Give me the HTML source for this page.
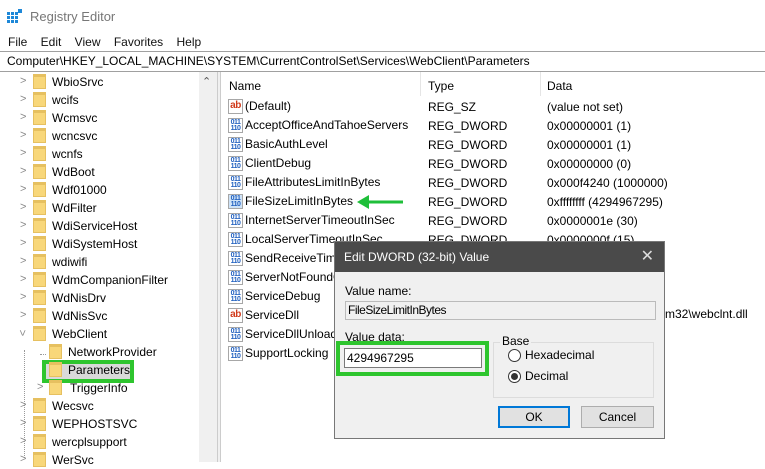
<!DOCTYPE html>
<html><head><meta charset="utf-8"><style>
*{margin:0;padding:0;box-sizing:border-box}
body{width:765px;height:462px;overflow:hidden;background:#fff;font-family:"Liberation Sans",sans-serif;font-size:12px;color:#000;position:relative}
.a{position:absolute;white-space:nowrap}
.tree div.r{position:absolute;height:18px;line-height:18px}
.fold{position:absolute;width:13px;height:15px;background:#f8d77a;border:1px solid #e6c060;border-top-width:3px}
.chev{position:absolute;color:#888;font-size:11px}
.row{position:absolute;left:228px;height:19px;line-height:19px}
.ic{position:absolute;width:15px;height:15px;top:2px;left:0;border:1px solid #a7a7a7;background:#fff;font-size:7px;line-height:6px;font-weight:bold;color:#1f5fbf;text-align:center;letter-spacing:-0.5px;padding-top:1px}
.ic.s{color:#d13b1c;font-size:10px;line-height:12px;padding-top:0}
.row .t{position:absolute;left:17px;font-size:12px}
</style></head><body>
<div class="a" style="left:7px;top:9px;width:15px;height:14px">
<svg width="15" height="14"><g fill="#1e88d8"><rect x="0" y="3" width="3" height="3"/><rect x="4" y="3" width="3" height="3"/><rect x="8" y="3" width="3" height="3"/><rect x="0" y="7" width="3" height="3"/><rect x="4" y="7" width="3" height="3"/><rect x="8" y="7" width="3" height="3"/><rect x="0" y="11" width="3" height="3"/><rect x="4" y="11" width="3" height="3"/><rect x="8" y="11" width="3" height="3"/><rect x="11" y="0" width="4" height="4"/></g></svg></div>
<div class="a" style="left:30px;top:9px;font-size:13px;color:#777">Registry Editor</div>
<div class="a" style="left:8px;top:35px;font-size:12px;color:#111">File&nbsp;&nbsp;&nbsp;&nbsp;Edit&nbsp;&nbsp;&nbsp;&nbsp;View&nbsp;&nbsp;&nbsp;&nbsp;Favorites&nbsp;&nbsp;&nbsp;&nbsp;Help</div>
<div class="a" style="left:0;top:51px;width:765px;height:21px;border-top:1px solid #a0a0a0;border-bottom:1px solid #a0a0a0;background:#fff"></div>
<div class="a" style="left:7px;top:54px;font-size:12px">Computer\HKEY_LOCAL_MACHINE\SYSTEM\CurrentControlSet\Services\WebClient\Parameters</div>
<div class="a" style="left:199px;top:72px;width:18px;height:390px;background:#f0f0f0"></div>
<div class="a" style="left:202px;top:75px;color:#555;font-size:11px">&#8963;</div>
<div class="a" style="left:217px;top:72px;width:4px;height:390px;background:#f0f0f0;border-left:1px solid #ccc;border-right:1px solid #ccc"></div>
<div class="a" style="left:24px;top:350px;height:108px;border-left:1px dotted #999"></div>
<div class="a" style="left:40px;top:354px;width:6px;border-top:1px dotted #999"></div>
<div class="tree">
<div class="chev" style="left:20px;top:75px">&gt;</div><div class="fold" style="left:33px;top:74px"></div><div class="r" style="left:52px;top:73px">WbioSrvc</div>
<div class="chev" style="left:20px;top:93px">&gt;</div><div class="fold" style="left:33px;top:92px"></div><div class="r" style="left:52px;top:91px">wcifs</div>
<div class="chev" style="left:20px;top:111px">&gt;</div><div class="fold" style="left:33px;top:110px"></div><div class="r" style="left:52px;top:109px">Wcmsvc</div>
<div class="chev" style="left:20px;top:129px">&gt;</div><div class="fold" style="left:33px;top:128px"></div><div class="r" style="left:52px;top:127px">wcncsvc</div>
<div class="chev" style="left:20px;top:147px">&gt;</div><div class="fold" style="left:33px;top:146px"></div><div class="r" style="left:52px;top:145px">wcnfs</div>
<div class="chev" style="left:20px;top:165px">&gt;</div><div class="fold" style="left:33px;top:164px"></div><div class="r" style="left:52px;top:163px">WdBoot</div>
<div class="chev" style="left:20px;top:183px">&gt;</div><div class="fold" style="left:33px;top:182px"></div><div class="r" style="left:52px;top:181px">Wdf01000</div>
<div class="chev" style="left:20px;top:201px">&gt;</div><div class="fold" style="left:33px;top:200px"></div><div class="r" style="left:52px;top:199px">WdFilter</div>
<div class="chev" style="left:20px;top:219px">&gt;</div><div class="fold" style="left:33px;top:218px"></div><div class="r" style="left:52px;top:217px">WdiServiceHost</div>
<div class="chev" style="left:20px;top:237px">&gt;</div><div class="fold" style="left:33px;top:236px"></div><div class="r" style="left:52px;top:235px">WdiSystemHost</div>
<div class="chev" style="left:20px;top:255px">&gt;</div><div class="fold" style="left:33px;top:254px"></div><div class="r" style="left:52px;top:253px">wdiwifi</div>
<div class="chev" style="left:20px;top:273px">&gt;</div><div class="fold" style="left:33px;top:272px"></div><div class="r" style="left:52px;top:271px">WdmCompanionFilter</div>
<div class="chev" style="left:20px;top:291px">&gt;</div><div class="fold" style="left:33px;top:290px"></div><div class="r" style="left:52px;top:289px">WdNisDrv</div>
<div class="chev" style="left:20px;top:309px">&gt;</div><div class="fold" style="left:33px;top:308px"></div><div class="r" style="left:52px;top:307px">WdNisSvc</div>
<div class="chev" style="left:19px;top:327px;transform:rotate(90deg)">&gt;</div><div class="fold" style="left:33px;top:326px"></div><div class="r" style="left:52px;top:325px">WebClient</div>
<div class="fold" style="left:49px;top:344px"></div><div class="r" style="left:68px;top:343px">NetworkProvider</div>
<div class="a" style="left:42px;top:360px;width:92px;height:23px;border:4px solid #2ec52e;background:#d9d9d9"></div>
<div class="fold" style="left:49px;top:362px"></div><div class="r" style="left:68px;top:361px">Parameters</div>
<div class="chev" style="left:37px;top:381px">&gt;</div><div class="fold" style="left:49px;top:380px"></div><div class="r" style="left:70px;top:379px">TriggerInfo</div>
<div class="chev" style="left:20px;top:399px">&gt;</div><div class="fold" style="left:33px;top:398px"></div><div class="r" style="left:52px;top:397px">Wecsvc</div>
<div class="chev" style="left:20px;top:417px">&gt;</div><div class="fold" style="left:33px;top:416px"></div><div class="r" style="left:52px;top:415px">WEPHOSTSVC</div>
<div class="chev" style="left:20px;top:435px">&gt;</div><div class="fold" style="left:33px;top:434px"></div><div class="r" style="left:52px;top:433px">wercplsupport</div>
<div class="chev" style="left:20px;top:453px">&gt;</div><div class="fold" style="left:33px;top:452px"></div><div class="r" style="left:52px;top:451px">WerSvc</div>
</div>
<div class="a" style="left:420px;top:72px;height:24px;border-left:1px solid #e5e5e5"></div>
<div class="a" style="left:540px;top:72px;height:24px;border-left:1px solid #e5e5e5"></div>
<div class="a" style="left:229px;top:79px">Name</div>
<div class="a" style="left:428px;top:79px">Type</div>
<div class="a" style="left:547px;top:79px">Data</div>
<div class="row" style="top:97px"><span class="ic s">ab</span><span class="t">(Default)</span></div>
<div class="row" style="top:116px"><span class="ic">011<br>110</span><span class="t">AcceptOfficeAndTahoeServers</span></div>
<div class="row" style="top:135px"><span class="ic">011<br>110</span><span class="t">BasicAuthLevel</span></div>
<div class="row" style="top:154px"><span class="ic">011<br>110</span><span class="t">ClientDebug</span></div>
<div class="row" style="top:173px"><span class="ic">011<br>110</span><span class="t">FileAttributesLimitInBytes</span></div>
<div class="row" style="top:192px"><span class="ic" style="background:#cfe3f7">011<br>110</span><span class="t">FileSizeLimitInBytes</span></div>
<div class="row" style="top:211px"><span class="ic">011<br>110</span><span class="t">InternetServerTimeoutInSec</span></div>
<div class="row" style="top:230px"><span class="ic">011<br>110</span><span class="t">LocalServerTimeoutInSec</span></div>
<div class="row" style="top:249px"><span class="ic">011<br>110</span><span class="t">SendReceiveTimeoutInSec</span></div>
<div class="row" style="top:268px"><span class="ic">011<br>110</span><span class="t">ServerNotFoundCacheLifeTimeInSec</span></div>
<div class="row" style="top:287px"><span class="ic">011<br>110</span><span class="t">ServiceDebug</span></div>
<div class="row" style="top:306px"><span class="ic s">ab</span><span class="t">ServiceDll</span></div>
<div class="row" style="top:325px"><span class="ic">011<br>110</span><span class="t">ServiceDllUnloadOnStop</span></div>
<div class="row" style="top:344px"><span class="ic">011<br>110</span><span class="t">SupportLocking</span></div>
<div class="a" style="left:428px;top:98px;line-height:19px">REG_SZ<br>REG_DWORD<br>REG_DWORD<br>REG_DWORD<br>REG_DWORD<br>REG_DWORD<br>REG_DWORD<br>REG_DWORD</div>
<div class="a" style="left:547px;top:98px;line-height:19px">(value not set)<br>0x00000001 (1)<br>0x00000001 (1)<br>0x00000000 (0)<br>0x000f4240 (1000000)<br>0xffffffff (4294967295)<br>0x0000001e (30)<br>0x0000000f (15)</div>
<div class="a" style="left:665px;top:307px">m32\webclnt.dll</div>
<svg class="a" style="left:355px;top:193px" width="50" height="18"><path d="M48 9H10" stroke="#1fbf3a" stroke-width="3"/><path d="M2 9L14 2V16Z" fill="#1fbf3a"/></svg>
<div class="a" style="left:334px;top:241px;width:331px;height:198px;background:#f0f0f0;border:1px solid #777">
<div style="position:absolute;left:0;top:0;width:329px;height:30px;background:#4a4a4a;color:#fff;font-size:12px;line-height:30px;padding-left:9px">Edit DWORD (32-bit) Value<span style="position:absolute;right:10px;top:0;font-size:16px;color:#ddd">&#10005;</span></div>
<div class="a" style="left:10px;top:42px">Value name:</div>
<div class="a" style="left:10px;top:59px;width:311px;height:19px;border:1px solid #bbb;background:#f0f0f0;line-height:17px;padding-left:2px;letter-spacing:-0.5px">FileSizeLimitInBytes</div>
<div class="a" style="left:10px;top:88px">Value data:</div>
<div class="a" style="left:1px;top:99px;width:153px;height:35px;border:4px solid #2ec52e"></div>
<div class="a" style="left:9px;top:106px;width:138px;height:20px;border:1px solid #7a7a7a;background:#fff;line-height:18px;padding-left:2px">4294967295</div>
<div class="a" style="left:158px;top:100px;width:161px;height:56px;border:1px solid #dcdcdc"></div>
<div class="a" style="left:165px;top:92px;background:#f0f0f0;padding:0 2px">Base</div>
<div class="a" style="left:173px;top:107px;width:13px;height:13px;border:1px solid #333;border-radius:50%;background:#fff"></div>
<div class="a" style="left:190px;top:106px">Hexadecimal</div>
<div class="a" style="left:173px;top:128px;width:13px;height:13px;border:1px solid #333;border-radius:50%;background:#fff"><div style="margin:2px;width:7px;height:7px;border-radius:50%;background:#333"></div></div>
<div class="a" style="left:190px;top:127px">Decimal</div>
<div class="a" style="left:163px;top:164px;width:72px;height:22px;border:2px solid #0078d7;background:#e1e1e1;text-align:center;line-height:18px">OK</div>
<div class="a" style="left:246px;top:164px;width:73px;height:22px;border:1px solid #adadad;background:#e1e1e1;text-align:center;line-height:20px">Cancel</div>
</div>
</body></html>
